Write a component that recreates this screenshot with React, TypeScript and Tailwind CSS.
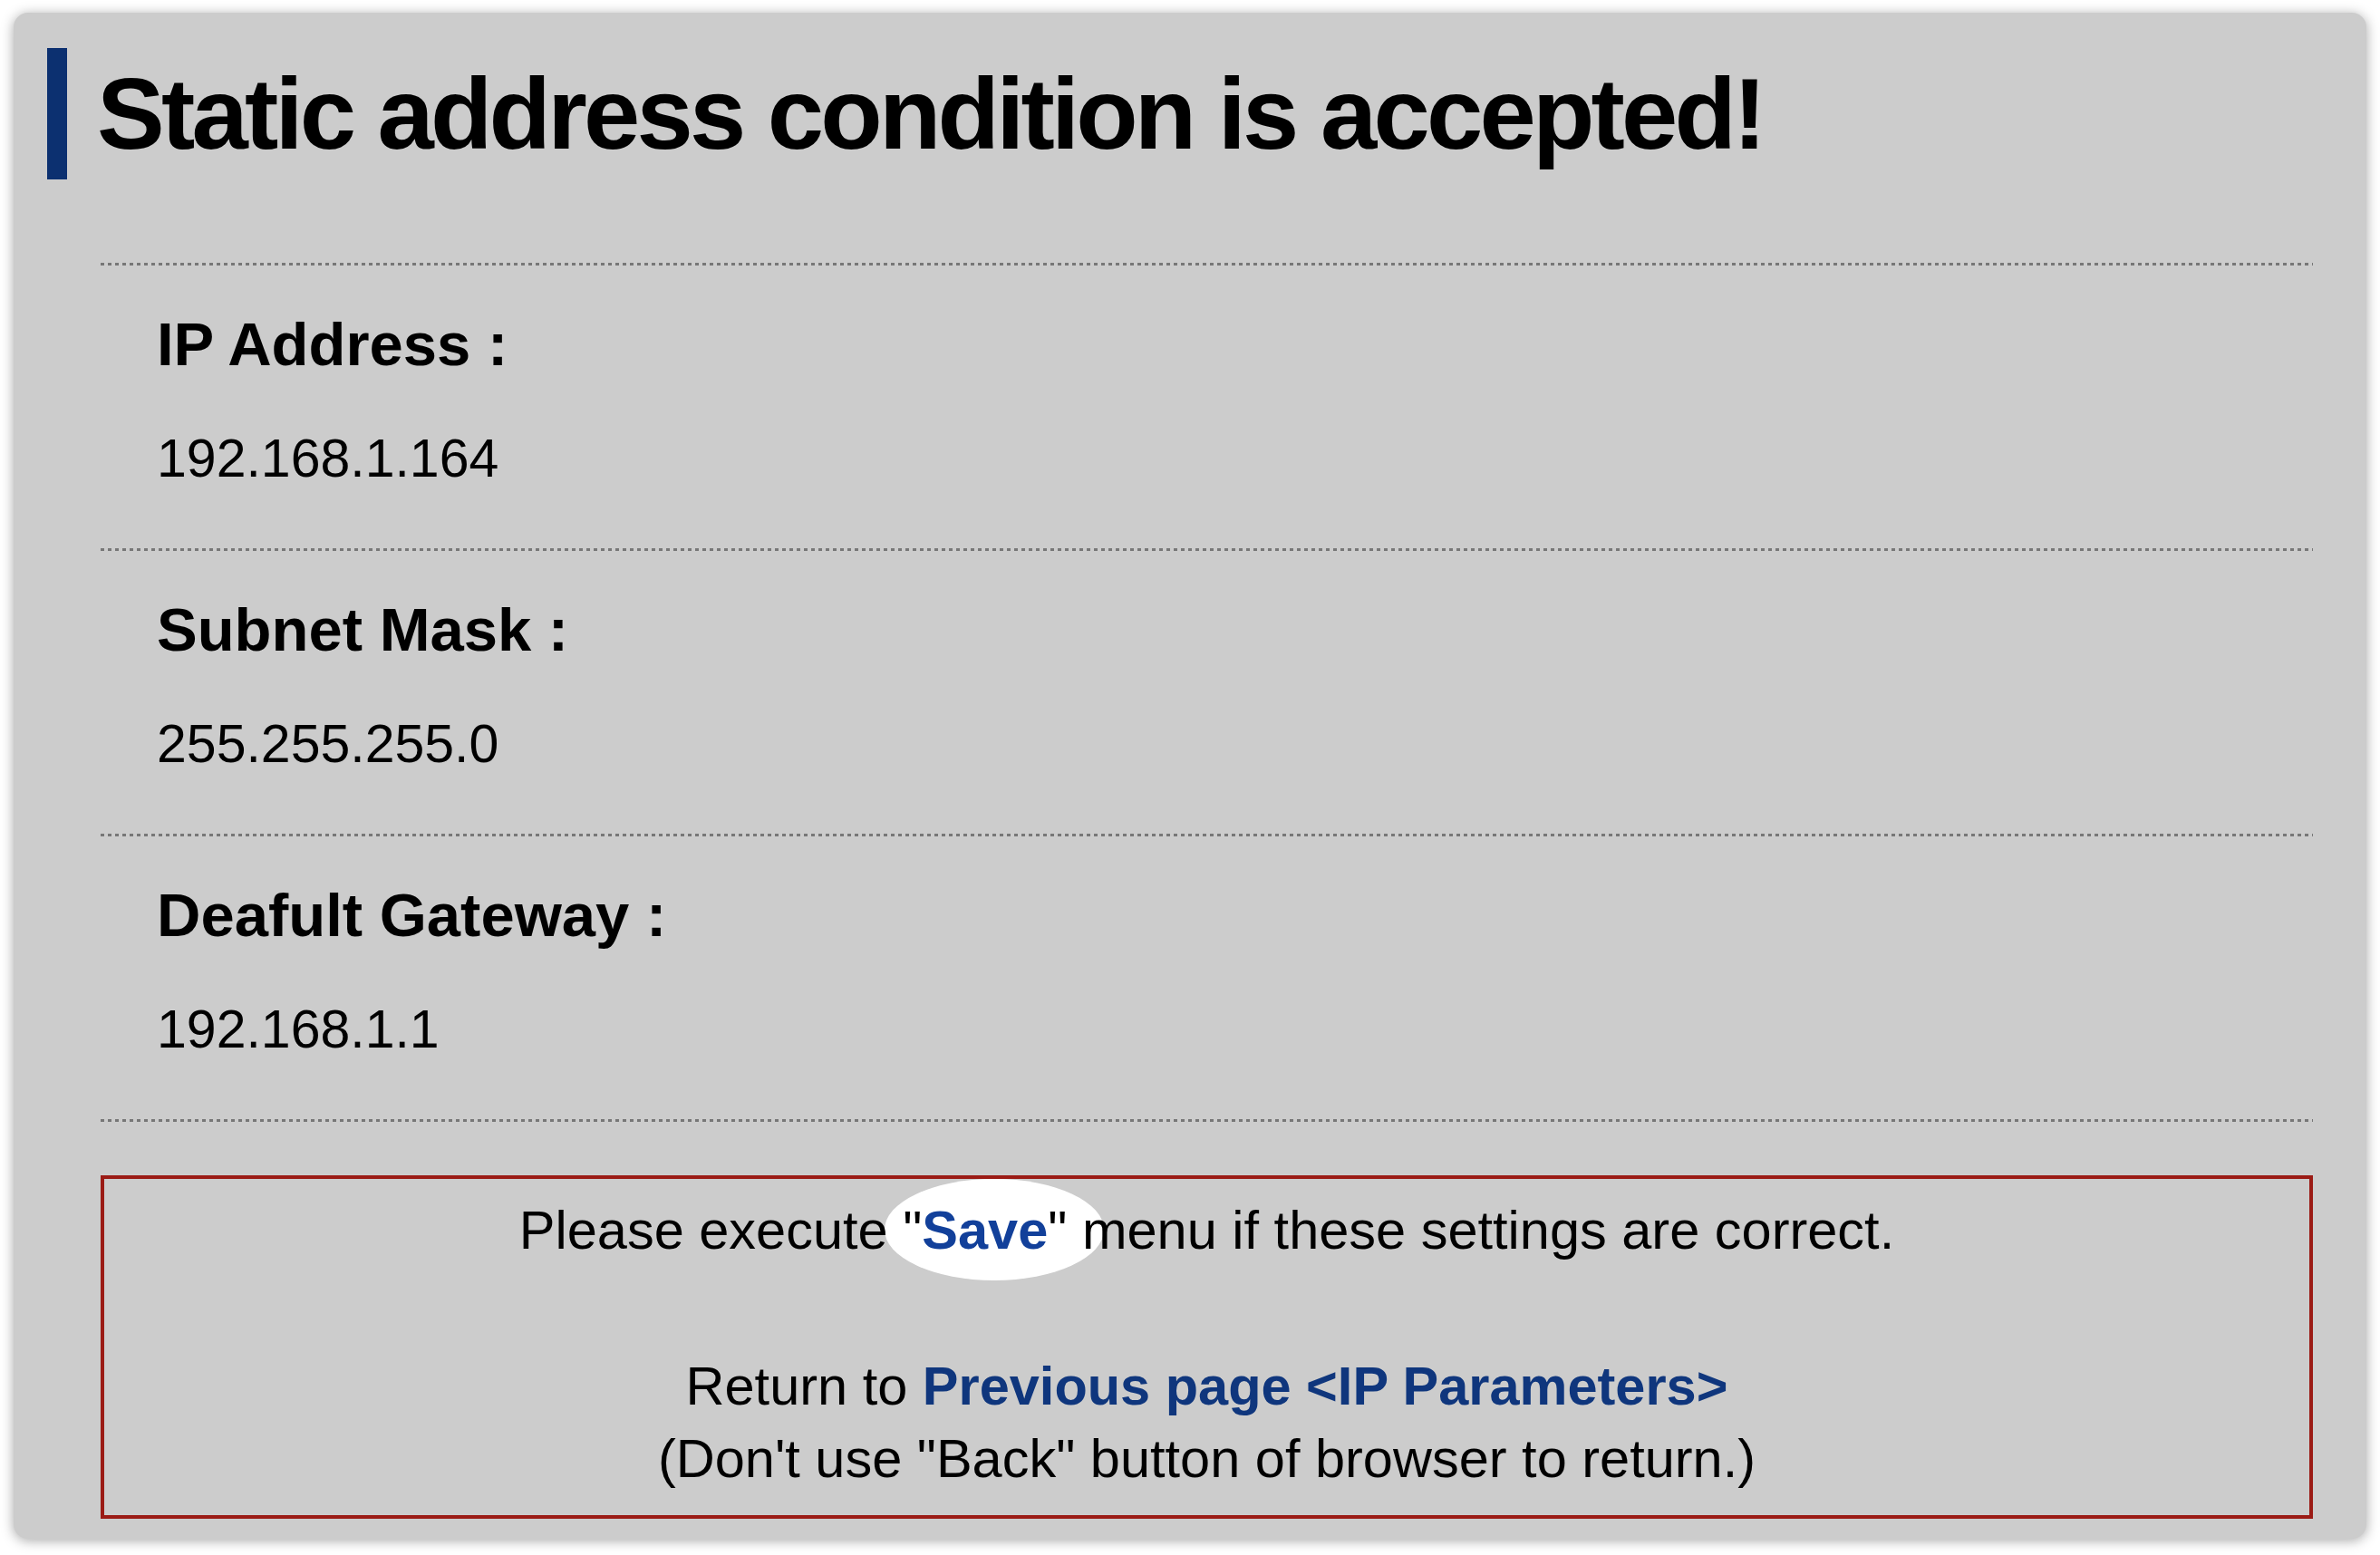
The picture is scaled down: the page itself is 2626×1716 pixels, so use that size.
const fields = [
  { label: "IP Address :", value: "192.168.1.164" },
  { label: "Subnet Mask :", value: "255.255.255.0" },
  { label: "Deafult Gateway :", value: "192.168.1.1" },
];

function Dotted() {
  return (
    <div className="h-[3px] w-full bg-[linear-gradient(to_right,#777_50%,transparent_50%)] bg-[length:8px_3px] bg-repeat-x" />
  );
}

function Field({ label, value }: { label: string; value: string }) {
  return (
    <div className="pl-[62px] pt-[53px] pb-[69px]">
      <div className="text-[67px] font-bold leading-none">{label}</div>
      <div className="mt-[64px] text-[59px] leading-none">{value}</div>
    </div>
  );
}

export default function App() {
  return (
    <div className="min-h-screen bg-white pl-[15px] pt-[14px] font-['Liberation_Sans',Arial,sans-serif] text-black">
      <div className="w-[2596px] rounded-[16px] bg-[#cccccc] pt-[39px] pb-[22px] shadow-[0_2px_14px_rgba(0,0,0,0.35)]">
        <h1 className="ml-[37px] flex h-[145px] items-center border-l-[22px] border-[#0c3070] pl-[33px] text-[112px] font-bold leading-none tracking-[-3.8px]">
          Static address condition is accepted!
        </h1>

        <div className="mt-[92px] ml-[96px] mr-[59px]">
          {fields.map((f) => (
            <div key={f.label}>
              <Dotted />
              <Field label={f.label} value={f.value} />
            </div>
          ))}
          <Dotted />

          <div className="mt-[59px] border-4 border-[#9b1b15] pt-[17px] pb-[22px] text-center text-[59.5px] leading-[80px]">
            <p className="isolate">
              Please execute{" "}
              <span className="relative inline-block">
                <span className="absolute -z-10 left-[-20px] top-[-17px] h-[112px] w-[242px] rounded-[50%] bg-white" />
                "<a className="font-bold text-[#12409a]">Save</a>"
              </span>{" "}
              menu if these settings are correct.
            </p>
            <p className="mt-[92px]">
              Return to{" "}
              <a className="font-bold text-[#0f367d]">Previous page &lt;IP Parameters&gt;</a>
            </p>
            <p>(Don't use "Back" button of browser to return.)</p>
          </div>
        </div>
      </div>
    </div>
  );
}
